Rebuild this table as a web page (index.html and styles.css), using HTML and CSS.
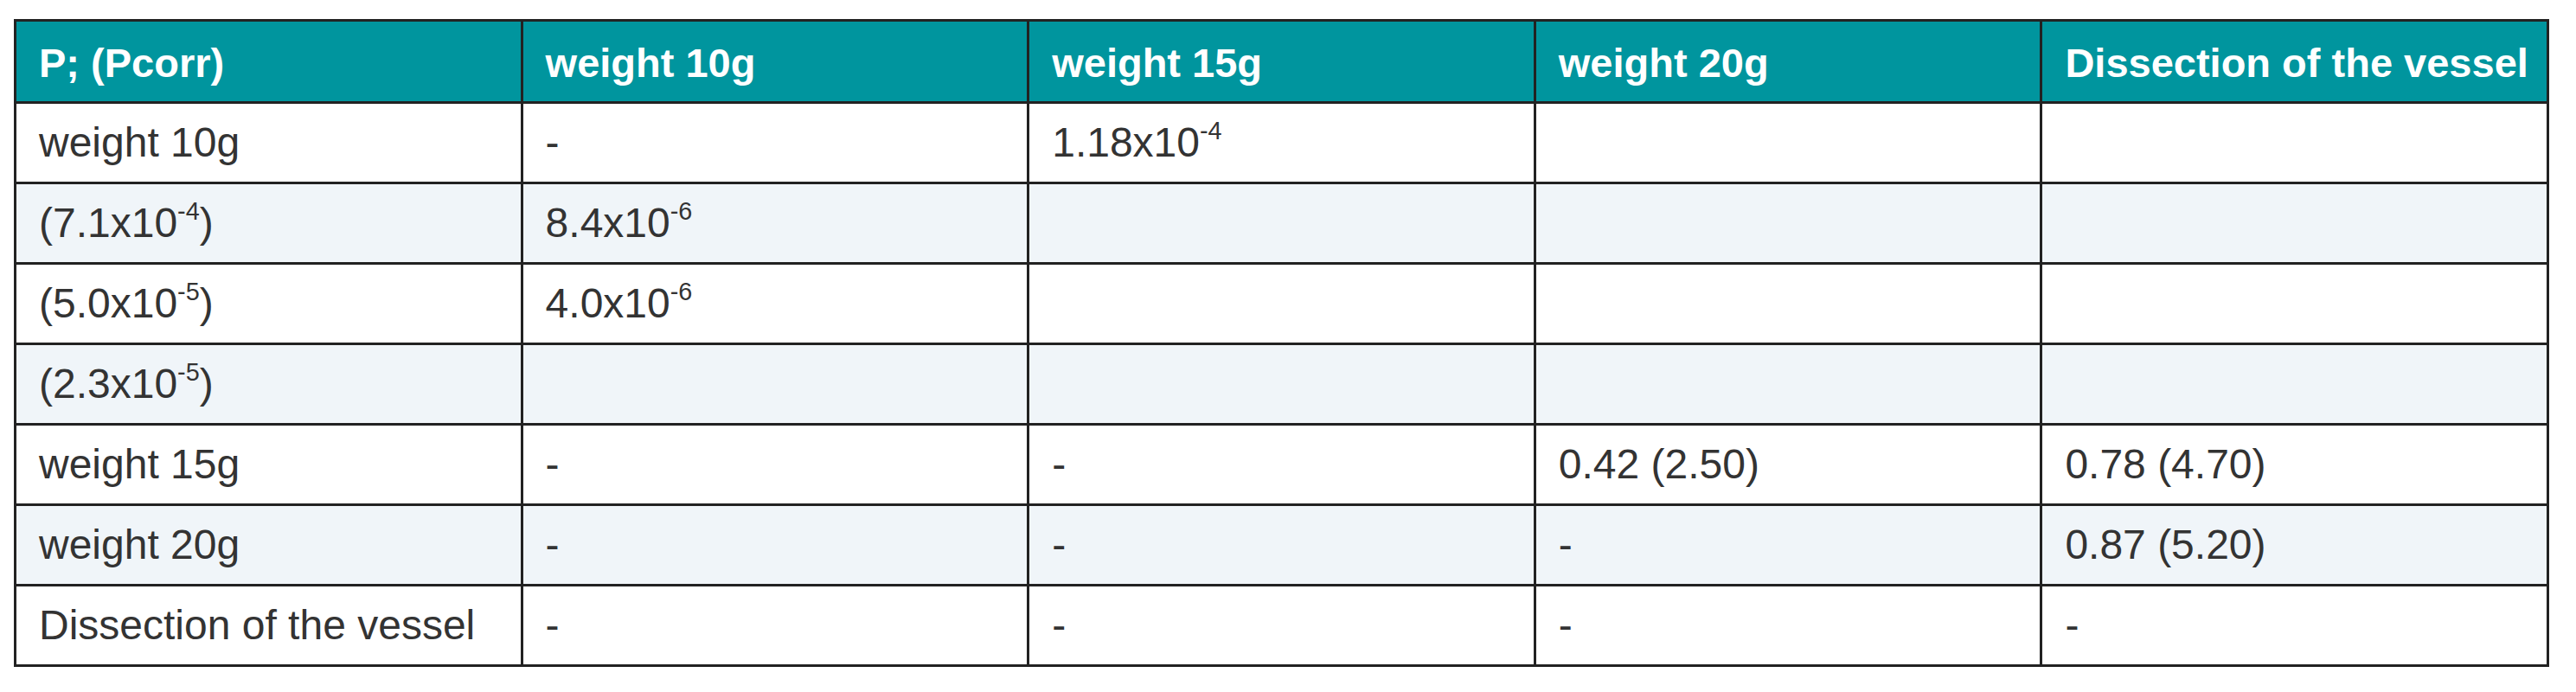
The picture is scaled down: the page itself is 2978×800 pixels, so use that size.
FILE: index.html
```html
<!DOCTYPE html>
<html lang="en">
<head>
<meta charset="utf-8">
<title>P; (Pcorr) table</title>
<link rel="stylesheet" href="styles.css">
</head>
<body>
<div class="page">
  <table class="stats">
    <colgroup>
      <col class="c"><col class="c"><col class="c"><col class="c"><col class="c">
    </colgroup>
    <thead>
      <tr>
        <th>P; (Pcorr)</th>
        <th>weight 10g</th>
        <th>weight 15g</th>
        <th>weight 20g</th>
        <th>Dissection of the vessel</th>
      </tr>
    </thead>
    <tbody>
      <tr>
        <td>weight 10g</td>
        <td>-</td>
        <td>1.18x10<sup>-4</sup></td>
        <td></td>
        <td></td>
      </tr>
      <tr>
        <td>(7.1x10<sup>-4</sup>)</td>
        <td>8.4x10<sup>-6</sup></td>
        <td></td>
        <td></td>
        <td></td>
      </tr>
      <tr>
        <td>(5.0x10<sup>-5</sup>)</td>
        <td>4.0x10<sup>-6</sup></td>
        <td></td>
        <td></td>
        <td></td>
      </tr>
      <tr>
        <td>(2.3x10<sup>-5</sup>)</td>
        <td></td>
        <td></td>
        <td></td>
        <td></td>
      </tr>
      <tr>
        <td>weight 15g</td>
        <td>-</td>
        <td>-</td>
        <td>0.42 (2.50)</td>
        <td>0.78 (4.70)</td>
      </tr>
      <tr>
        <td>weight 20g</td>
        <td>-</td>
        <td>-</td>
        <td>-</td>
        <td>0.87 (5.20)</td>
      </tr>
      <tr>
        <td>Dissection of the vessel</td>
        <td>-</td>
        <td>-</td>
        <td>-</td>
        <td>-</td>
      </tr>
    </tbody>
  </table>
</div>
</body>
</html>
```
FILE: styles.css
```css
html, body {
  margin: 0;
  padding: 0;
  background: #ffffff;
}

.page {
  padding: 22px 0 0 16px;
}

.stats {
  width: 2931px;
  table-layout: fixed;
  border-collapse: collapse;
  font-family: "Liberation Sans", Arial, sans-serif;
  color: #333333;
}

.stats .c {
  width: 20%;
}

.stats th,
.stats td {
  border: 3px solid #222222;
  height: 90px;
  padding: 0 0 0 26px;
  text-align: left;
  vertical-align: middle;
  white-space: nowrap;
  line-height: 1;
}

.stats th {
  background: #00959e;
  color: #ffffff;
  font-weight: bold;
  font-size: 47px;
  padding-top: 2px;
}

.stats td {
  font-size: 48px;
  font-weight: normal;
}

.stats tbody tr:nth-child(even) td {
  background: #f0f5f9;
}

.stats sup {
  font-size: 60%;
  line-height: 0;
  vertical-align: 0.7em;
}
```
